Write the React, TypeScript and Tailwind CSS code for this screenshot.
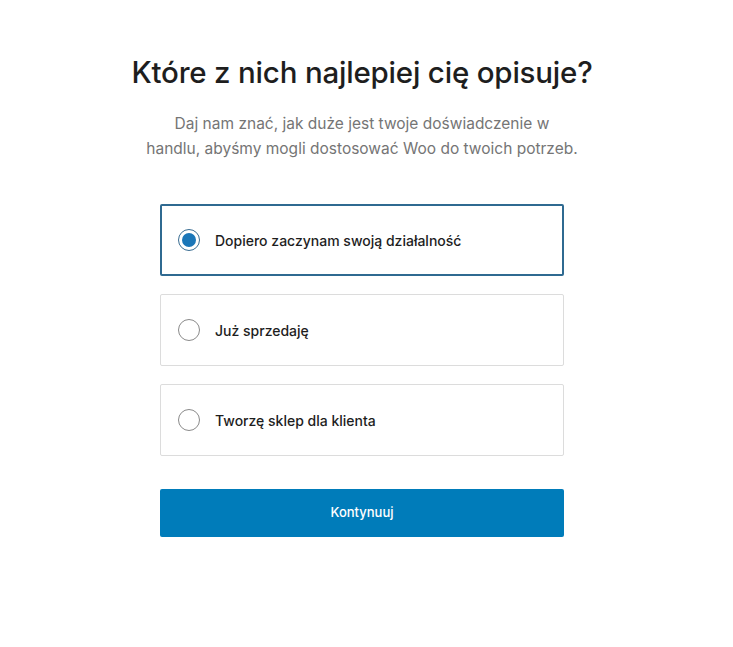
import { useState } from 'react'

const options = [
  'Dopiero zaczynam swoją działalność',
  'Już sprzedaję',
  'Tworzę sklep dla klienta',
]

export default function App() {
  const [selected, setSelected] = useState(0)

  return (
    <div
      className="min-h-screen bg-white pr-[9px] pt-[52px]"
      style={{ fontFamily: 'Inter, "Noto Sans", sans-serif' }}
    >
      <div className="flex flex-col items-center">
        <h1 className="text-[29.5px] leading-[40px] font-medium text-[#1e1e1e] tracking-[-0.2px]">
          Które z nich najlepiej cię opisuje?
        </h1>
        <p className="mt-[19px] whitespace-nowrap text-center text-[15.5px] leading-[25px] text-[#757575]">
          Daj nam znać, jak duże jest twoje doświadczenie w
          <br />
          handlu, abyśmy mogli dostosować Woo do twoich potrzeb.
        </p>

        <div className="mt-[43px] flex w-[404px] flex-col gap-[18px]">
          {options.map((label, i) => {
            const active = selected === i
            return (
              <button
                key={label}
                onClick={() => setSelected(i)}
                className={
                  active
                    ? 'flex h-[72px] items-center rounded-[2px] border-2 border-[#2f6a91] bg-white pl-[16px] text-left'
                    : 'flex h-[72px] items-center rounded-[2px] border border-[#dcdcdc] bg-white pl-[17px] text-left'
                }
              >
                {active ? (
                  <span className="flex h-[22px] w-[22px] items-center justify-center rounded-full border border-[#3a6d92] bg-white">
                    <span className="h-[14px] w-[14px] rounded-full bg-[#1a76b8]" />
                  </span>
                ) : (
                  <span className="h-[22px] w-[22px] rounded-full border border-[#8a8a8a] bg-white" />
                )}
                <span className="ml-[15px] text-[14px] font-medium text-[#1e1e1e]">{label}</span>
              </button>
            )
          })}
        </div>

        <button className="mt-[33px] h-[48px] w-[404px] rounded-[2px] bg-[#007cba] text-[13px] font-medium text-white">
          Kontynuuj
        </button>
      </div>
    </div>
  )
}
